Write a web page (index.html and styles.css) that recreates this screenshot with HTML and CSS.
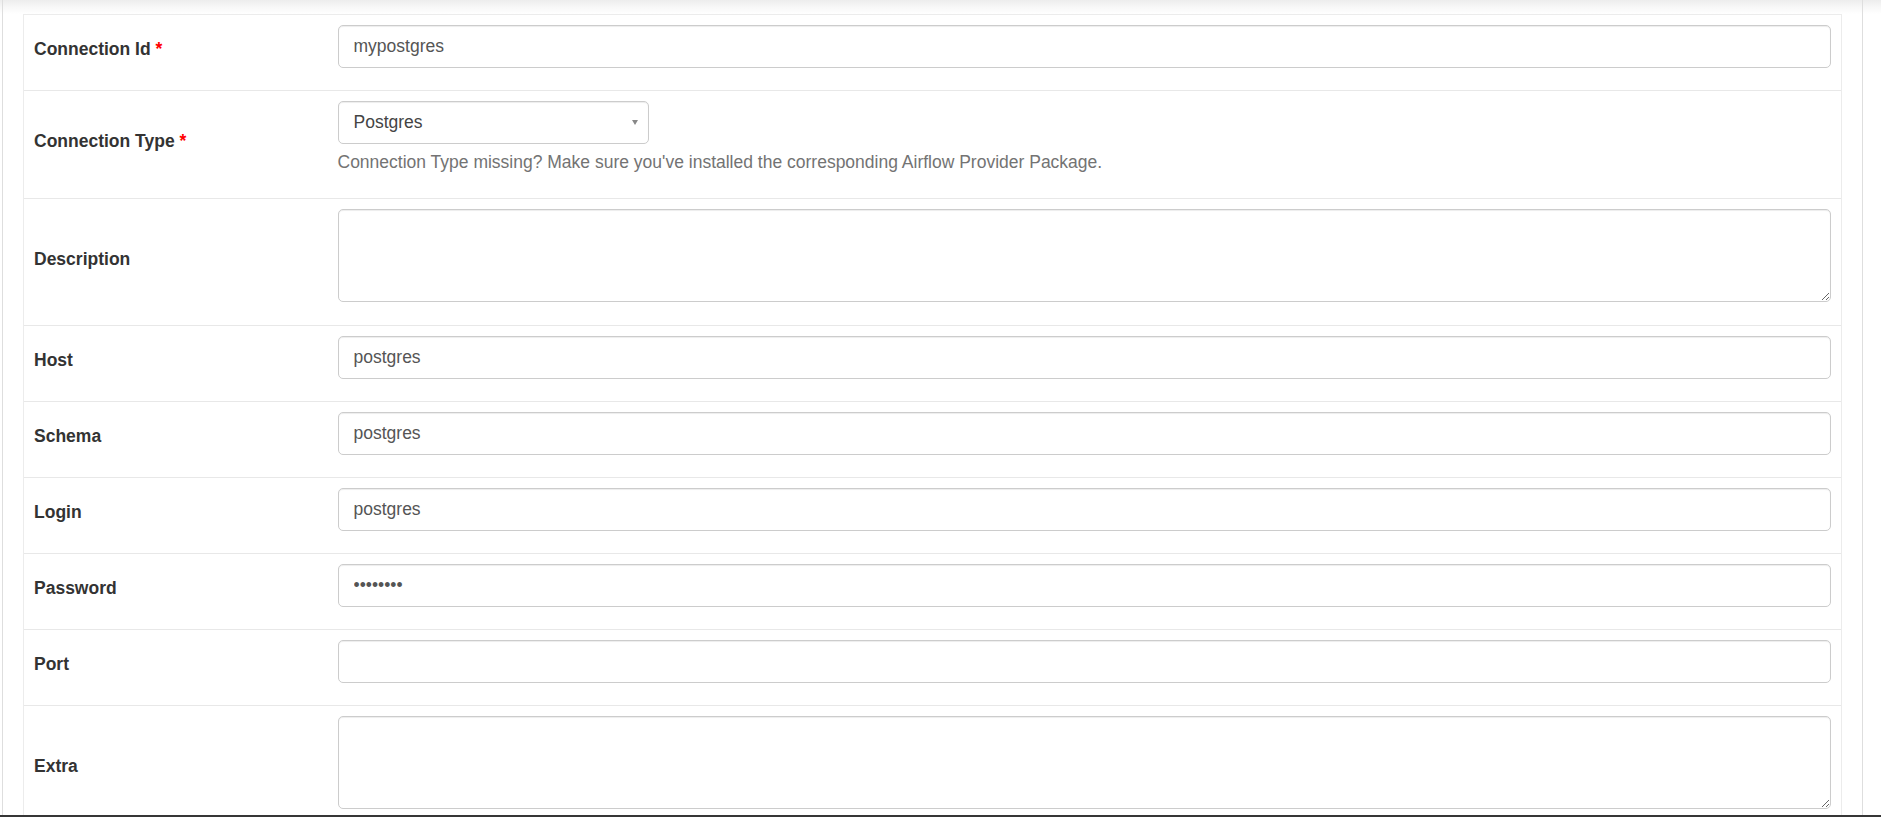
FILE: index.html
```html
<!DOCTYPE html>
<html lang="en">
<head>
<meta charset="utf-8">
<title>Edit Connection</title>
<link rel="stylesheet" href="styles.css">
</head>
<body>
<div class="viewport">
  <div class="page">
    <form class="form-box">
      <div class="form-row">
        <div class="label-cell"><label>Connection Id <strong class="req">*</strong></label></div>
        <div class="field-cell"><input class="form-control" type="text" value="mypostgres"></div>
      </div>
      <div class="form-row">
        <div class="label-cell"><label>Connection Type <strong class="req">*</strong></label></div>
        <div class="field-cell">
          <div class="select2">
            <span class="select2-text">Postgres</span>
            <span class="select2-arrow"></span>
          </div>
          <p class="help-block">Connection Type missing? Make sure you've installed the corresponding Airflow Provider Package.</p>
        </div>
      </div>
      <div class="form-row">
        <div class="label-cell"><label>Description</label></div>
        <div class="field-cell"><textarea class="form-control textarea"></textarea></div>
      </div>
      <div class="form-row">
        <div class="label-cell"><label>Host</label></div>
        <div class="field-cell"><input class="form-control" type="text" value="postgres"></div>
      </div>
      <div class="form-row">
        <div class="label-cell"><label>Schema</label></div>
        <div class="field-cell"><input class="form-control" type="text" value="postgres"></div>
      </div>
      <div class="form-row">
        <div class="label-cell"><label>Login</label></div>
        <div class="field-cell"><input class="form-control" type="text" value="postgres"></div>
      </div>
      <div class="form-row">
        <div class="label-cell"><label>Password</label></div>
        <div class="field-cell"><input class="form-control" type="password" value="postgres"></div>
      </div>
      <div class="form-row">
        <div class="label-cell"><label>Port</label></div>
        <div class="field-cell"><input class="form-control" type="text" value=""></div>
      </div>
      <div class="form-row">
        <div class="label-cell"><label>Extra</label></div>
        <div class="field-cell"><textarea class="form-control textarea"></textarea></div>
      </div>
    </form>
  </div>
</div>
<div class="bottom-edge"></div>
</body>
</html>
```
FILE: styles.css
```css
html, body {
  margin: 0;
  padding: 0;
  background: #fff;
}

body {
  font-family: "Liberation Sans", Arial, sans-serif;
  font-size: 17.5px;
  line-height: 25px;
  color: #333;
}

.viewport {
  height: 815px;
  overflow: hidden;
  background: linear-gradient(to bottom, #ededed 0, #f6f6f6 6px, #fff 14px) no-repeat;
  background-size: 100% 14px;
}

.page {
  margin-left: 2px;
  width: 1861px;
  height: 100%;
  box-sizing: border-box;
  border-left: 1px solid #dedede;
  border-right: 1px solid #dedede;
  padding: 14px 20px 0;
}

.form-box {
  margin: 0;
  background: #fff;
  border: 1px solid #ececec;
}

.form-row {
  display: grid;
  grid-template-columns: 303.5px 1fr;
  border-top: 1px solid #e8e8e8;
}

.form-row:first-child {
  border-top: none;
}

.label-cell {
  display: flex;
  align-items: center;
  padding: 10px;
}

.label-cell label {
  display: inline-block;
  margin-bottom: 6.25px;
  font-weight: bold;
  color: #333;
}

.req {
  color: red;
  font-weight: bold;
}

.field-cell {
  padding: 10px 10px 22.5px;
  min-width: 0;
}

.form-control {
  display: block;
  width: 100%;
  height: 42.5px;
  box-sizing: border-box;
  margin: 0;
  padding: 7.5px 15px;
  font-family: "Liberation Sans", Arial, sans-serif;
  font-size: 17.5px;
  line-height: 25px;
  color: #555;
  background: #fff;
  border: 1px solid #ccc;
  border-radius: 5px;
  box-shadow: inset 0 1px 1px rgba(0, 0, 0, 0.075);
  outline: none;
}

.textarea {
  height: 92.5px;
  margin-bottom: 1px;
  resize: vertical;
}

.select2 {
  width: 311px;
  height: 42.5px;
  box-sizing: border-box;
  display: flex;
  align-items: center;
  justify-content: space-between;
  padding: 0 10px 0 15px;
  background: #fff;
  border: 1px solid #ccc;
  border-radius: 5px;
  box-shadow: inset 0 1px 1px rgba(0, 0, 0, 0.075);
}

.select2-text {
  color: #444;
}

.select2-arrow {
  width: 0;
  height: 0;
  border-style: solid;
  border-width: 5px 3.5px 0 3.5px;
  border-color: #888 transparent transparent transparent;
}

.help-block {
  margin: 6.25px 0 1px;
  color: #737373;
}

.bottom-edge {
  height: 2px;
  background: #363636;
}
```
